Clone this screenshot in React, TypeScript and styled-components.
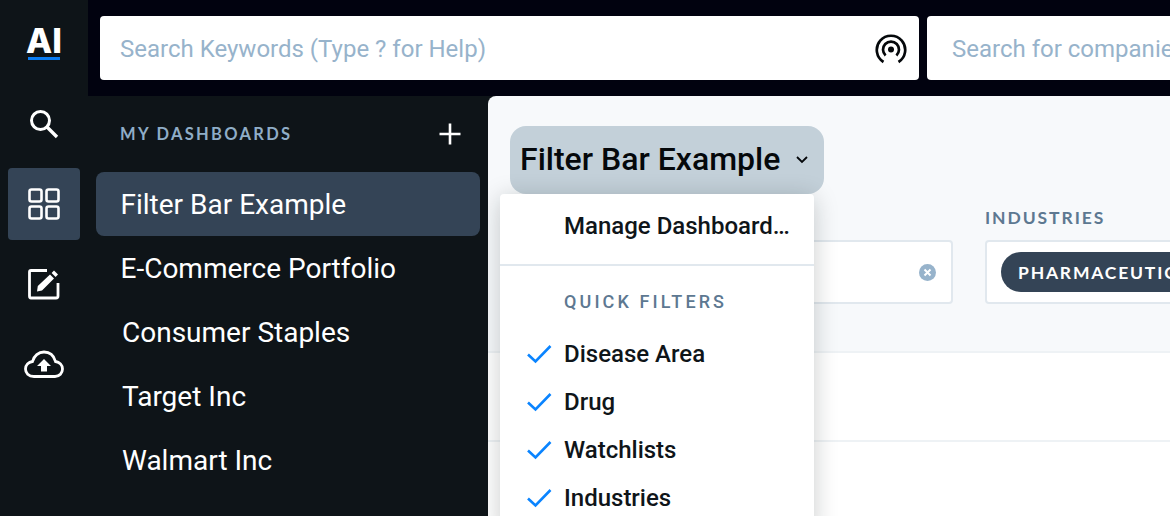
import * as React from "react";
import styled, { createGlobalStyle } from "styled-components";

const GlobalStyle = createGlobalStyle`
  html, body {
    margin: 0;
    padding: 0;
    height: 516px;
    overflow: hidden;
    background: #0e1418;
    font-family: Roboto, "Liberation Sans", sans-serif;
  }
  * { box-sizing: border-box; }
`;

const Shell = styled.div`
  display: flex;
  width: 1170px;
  height: 516px;
  overflow: hidden;
`;

const Rail = styled.nav`
  flex: 0 0 88px;
  display: flex;
  flex-direction: column;
  align-items: center;
  background: #0e1418;
`;

const Logo = styled.div`
  height: 88px;
  padding-top: 27px;
  display: flex;
  flex-direction: column;
  align-items: center;
`;

const LogoText = styled.span`
  font-family: Inter, sans-serif;
  font-weight: 800;
  font-size: 34px;
  line-height: 28px;
  height: 28px;
  color: #fff;
`;

const LogoBar = styled.span`
  width: 32px;
  height: 3px;
  margin-top: 2px;
  background: #0a7cf2;
`;

const RailButton = styled.div<{ $active?: boolean }>`
  width: 72px;
  height: 72px;
  margin-bottom: 8px;
  display: flex;
  align-items: center;
  justify-content: center;
  border-radius: 4px;
  color: #fff;
  background: ${({ $active }) => ($active ? "#344456" : "transparent")};
`;

const Column = styled.div`
  flex: 1;
  min-width: 0;
  display: flex;
  flex-direction: column;
`;

const TopBar = styled.header`
  flex: 0 0 96px;
  display: flex;
  gap: 8px;
  padding: 16px 0 16px 12px;
  background: #01020f;
`;

const SearchBox = styled.div<{ $wide?: boolean }>`
  flex: 0 0 ${({ $wide }) => ($wide ? "819px" : "600px")};
  display: flex;
  align-items: center;
  justify-content: space-between;
  padding: 2px 12px 0 ${({ $wide }) => ($wide ? "20px" : "25px")};
  background: #fff;
  border-radius: 4px;
  font-size: 24px;
  color: #97b3cb;
  white-space: nowrap;
  overflow: hidden;
`;

const Body = styled.div`
  flex: 1;
  min-height: 0;
  display: flex;
`;

const Sidebar = styled.aside`
  flex: 0 0 400px;
  padding: 0 8px;
  background: #0e1418;
`;

const SidebarHead = styled.div`
  height: 76px;
  display: flex;
  align-items: center;
  justify-content: space-between;
  padding: 0 18px 0 24px;
`;

const SidebarLabel = styled.span`
  margin-top: -1px;
  font-family: Lato, sans-serif;
  font-weight: 700;
  font-size: 16.5px;
  letter-spacing: 2.3px;
  color: #8fadc7;
`;

const DashItem = styled.div<{ $active?: boolean; $inset?: number }>`
  height: 64px;
  display: flex;
  align-items: center;
  padding-left: ${({ $inset }) => $inset ?? 24.5}px;
  font-size: 28px;
  color: #fff;
  border-radius: 8px;
  background: ${({ $active }) => ($active ? "#344456" : "transparent")};
`;

const Main = styled.main`
  position: relative;
  flex: 1;
  min-width: 0;
  background: #f7f9fb;
  border-top-left-radius: 8px;
  overflow: hidden;
`;

const TitleButton = styled.div`
  position: absolute;
  left: 22px;
  top: 30px;
  width: 314px;
  height: 68px;
  display: flex;
  align-items: center;
  justify-content: space-between;
  padding: 0 16px 2px 10px;
  background: #c3d0d9;
  border-radius: 16px;
  font-size: 32px;
  font-weight: 500;
  color: #05080b;
  white-space: nowrap;

  svg {
    margin-top: 2px;
  }
`;

const FilterRow = styled.div`
  display: flex;
  gap: 32px;
  padding: 112px 0 0 22px;
  height: 255px;
`;

const Filter = styled.div<{ $grow?: boolean }>`
  flex: 0 0 ${({ $grow }) => ($grow ? "400px" : "443px")};
  display: flex;
  flex-direction: column;
`;

const FilterLabel = styled.span`
  height: 32px;
  line-height: 20px;
  font-family: Lato, sans-serif;
  font-weight: 700;
  font-size: 17.5px;
  letter-spacing: 1.9px;
  color: #5d7891;
`;

const FilterField = styled.div`
  height: 64px;
  display: flex;
  align-items: center;
  justify-content: flex-end;
  padding: 0 15px 0 14px;
  background: #fff;
  border: 2px solid #e1e8ee;
  border-radius: 4px;
`;

const Pill = styled.span`
  flex: none;
  height: 40px;
  margin-right: auto;
  padding: 0 17px;
  display: flex;
  align-items: center;
  border-radius: 20px;
  background: #344456;
  color: #fff;
  font-family: Lato, sans-serif;
  font-weight: 700;
  font-size: 17.5px;
  letter-spacing: 1.8px;
  white-space: nowrap;
`;

const TableRow = styled.div<{ $first?: boolean }>`
  height: ${({ $first }) => ($first ? "89px" : "90px")};
  background: #fff;
  border-top: 2px solid #eef2f5;
`;

const Menu = styled.div`
  position: absolute;
  left: 12px;
  top: 98px;
  width: 314px;
  height: 340px;
  background: #fff;
  border-radius: 4px;
  box-shadow: 0 4px 24px rgba(15, 21, 25, 0.22);
`;

const ManageItem = styled.div`
  height: 72px;
  padding: 18px 0 0 64px;
  line-height: 28px;
  font-size: 24px;
  font-weight: 500;
  color: #0f1519;
  border-bottom: 2px solid #e1e8ee;
  white-space: nowrap;
`;

const MenuLabel = styled.div`
  height: 64px;
  padding: 25px 0 0 64px;
  line-height: 22px;
  font-size: 18px;
  font-weight: 500;
  letter-spacing: 3.1px;
  color: #5d7891;
`;

const MenuItem = styled.div`
  height: 48px;
  display: flex;
  align-items: center;
  gap: 12px;
  padding-left: 26px;
  font-size: 24px;
  font-weight: 500;
  color: #0f1519;
`;

const CheckIcon = () => (
  <svg width="26" height="20" viewBox="0 0 26 20" fill="none" stroke="#0a84ff" strokeWidth="2.6">
    <path d="M2 10.5 L9.5 17.5 L24.5 2" />
  </svg>
);

const SearchIcon = () => (
  <svg width="32" height="32" viewBox="0 0 32 32" fill="none" stroke="#fff" strokeWidth="3">
    <circle cx="12.5" cy="12.5" r="9" />
    <path d="M19 19 L29 29" strokeWidth="3.4" />
  </svg>
);

const GridIcon = () => (
  <svg width="32" height="32" viewBox="0 0 32 32" fill="none" stroke="#fff" strokeWidth="2.6">
    <rect x="1.5" y="1.5" width="12" height="12" rx="2" />
    <rect x="18.5" y="1.5" width="12" height="12" rx="2" />
    <rect x="1.5" y="18.5" width="12" height="12" rx="2" />
    <rect x="18.5" y="18.5" width="12" height="12" rx="2" />
  </svg>
);

const EditIcon = () => (
  <svg width="32" height="32" viewBox="0 0 32 32" fill="none">
    <path d="M19 2.5 H3 Q1.5 2.5 1.5 4 V28 Q1.5 30 3 30 H28 Q30 30 30 28 V15" stroke="#fff" strokeWidth="2.8" />
    <path d="M9 23.5 L9.8 18 L22 6.5 L26 10.6 L14 22.6 Z M23.6 5 L26 2.6 L30 6.6 L27.6 9 Z" fill="#fff" />
  </svg>
);

const CloudIcon = () => (
  <svg width="40" height="28" viewBox="0 0 40 28" fill="none">
    <path
      d="M10 26.5 C4.5 26.5 1.5 23 1.5 19 C1.5 15 4.5 12 8.5 11.5 C10 6 14.5 2 20 2 C26 2 30 6 31.5 11.5 C35.5 12 38.5 15 38.5 19 C38.5 23 35.5 26.5 31 26.5 Z"
      stroke="#fff"
      strokeWidth="2.8"
    />
    <path d="M20 9 L27 16 H23 V21.5 H17 V16 H13 Z" fill="#fff" />
  </svg>
);

const PlusIcon = () => (
  <svg width="24" height="24" viewBox="0 0 24 24" stroke="#fff" strokeWidth="2.6">
    <path d="M12 1.5 V22.5 M1.5 12 H22.5" />
  </svg>
);

const BroadcastIcon = () => (
  <svg width="32" height="30" viewBox="0 0 32 30" fill="none" stroke="#05080b" strokeWidth="2.7">
    <path d="M8.5 28 A14.2 14.2 0 1 1 23.5 28" />
    <path d="M10.6 21.5 A8 8 0 1 1 21.4 21.5" />
    <circle cx="16" cy="15.5" r="3" fill="#05080b" stroke="none" />
  </svg>
);

const ChevronIcon = () => (
  <svg width="12" height="8" viewBox="0 0 12 8" fill="none" stroke="#05080b" strokeWidth="1.8">
    <path d="M1 1 L6 6 L11 1" />
  </svg>
);

const ClearIcon = () => (
  <svg width="17" height="17" viewBox="0 0 17 17">
    <circle cx="8.5" cy="8.5" r="8.5" fill="#97b3cb" />
    <path d="M5.5 5.5 L11.5 11.5 M11.5 5.5 L5.5 11.5" stroke="#fff" strokeWidth="2" />
  </svg>
);

const dashboards: { name: string; inset?: number }[] = [
  { name: "E-Commerce Portfolio" },
  { name: "Consumer Staples", inset: 26 },
  { name: "Target Inc", inset: 26 },
  { name: "Walmart Inc", inset: 26 },
];

const quickFilters = ["Disease Area", "Drug", "Watchlists", "Industries"];

const App: React.FC = () => (
  <>
    <GlobalStyle />
    <Shell>
      <Rail>
        <Logo>
          <LogoText>AI</LogoText>
          <LogoBar />
        </Logo>
        <RailButton><SearchIcon /></RailButton>
        <RailButton $active><GridIcon /></RailButton>
        <RailButton><EditIcon /></RailButton>
        <RailButton><CloudIcon /></RailButton>
      </Rail>
      <Column>
        <TopBar>
          <SearchBox $wide>
            Search Keywords (Type ? for Help)
            <BroadcastIcon />
          </SearchBox>
          <SearchBox>
            Search for companies
          </SearchBox>
        </TopBar>
        <Body>
          <Sidebar>
            <SidebarHead>
              <SidebarLabel>MY DASHBOARDS</SidebarLabel>
              <PlusIcon />
            </SidebarHead>
            <DashItem $active>Filter Bar Example</DashItem>
            {dashboards.map((d) => (
              <DashItem key={d.name} $inset={d.inset}>{d.name}</DashItem>
            ))}
          </Sidebar>
          <Main>
            <FilterRow>
              <Filter>
                <FilterLabel />
                <FilterField><ClearIcon /></FilterField>
              </Filter>
              <Filter $grow>
                <FilterLabel>INDUSTRIES</FilterLabel>
                <FilterField><Pill>PHARMACEUTICALS</Pill></FilterField>
              </Filter>
            </FilterRow>
            <TableRow $first />
            <TableRow />
            <TitleButton>
              Filter Bar Example
              <ChevronIcon />
            </TitleButton>
            <Menu>
              <ManageItem>Manage Dashboard…</ManageItem>
              <MenuLabel>QUICK FILTERS</MenuLabel>
              {quickFilters.map((f) => (
                <MenuItem key={f}><CheckIcon />{f}</MenuItem>
              ))}
            </Menu>
          </Main>
        </Body>
      </Column>
    </Shell>
  </>
);

export default App;
